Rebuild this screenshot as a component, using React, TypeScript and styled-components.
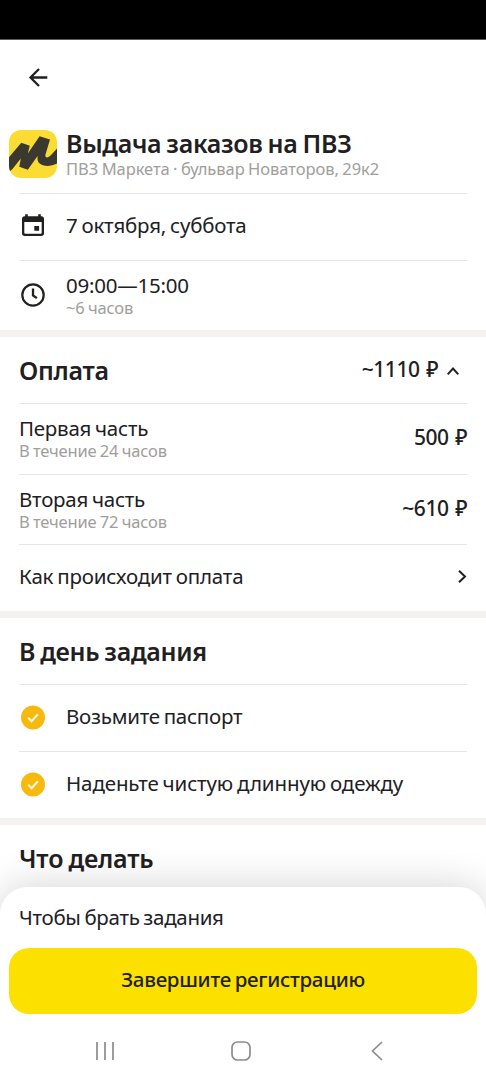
import React from "react";
import styled, { createGlobalStyle } from "styled-components";

const GlobalStyle = createGlobalStyle`
  *, *::before, *::after { box-sizing: border-box; }
  body {
    margin: 0;
    background: #fff;
    color: #21201f;
    font-family: "Noto Sans", "Open Sans", sans-serif;
  }
`;

const Screen = styled.div`
  width: 486px;
  height: 1080px;
  display: flex;
  flex-direction: column;
  overflow: hidden;
  background: #fff;
`;

const StatusBar = styled.div`
  height: 40px;
  flex: none;
  background: #000;
  border-bottom: 1px solid #5c5c5c;
`;

const Content = styled.main`
  height: 847px;
  flex: none;
  display: flex;
  flex-direction: column;
`;

const Header = styled.header`
  height: 76px;
  flex: none;
  padding: 25px 0 0 26px;
`;

const Hero = styled.div`
  height: 77px;
  flex: none;
  display: flex;
  gap: 9px;
  padding: 12px 0 0 9px;
`;

const HeroLogo = styled.svg`
  margin-top: 2px;
  flex: none;
`;

const Stack = styled.div`
  display: flex;
  flex-direction: column;
`;

const Title = styled.h1<{ $track?: number }>`
  margin: 0;
  font-size: 25px;
  line-height: 30px;
  font-weight: 600;
  white-space: nowrap;
  letter-spacing: ${(p) => p.$track ?? -0.29}px;
  word-spacing: -1.2px;
`;

const Primary = styled.span<{ $track?: number }>`
  font-size: 20.5px;
  line-height: 24px;
  white-space: nowrap;
  letter-spacing: ${(p) => p.$track ?? -0.24}px;
  word-spacing: -1.2px;
`;

const Amount = styled.span`
  font-size: 21px;
  line-height: 24px;
  font-weight: 500;
  white-space: nowrap;
  letter-spacing: -0.5px;
  word-spacing: 1.8px;
  padding-bottom: 2px;
`;

const Secondary = styled.span<{ $track?: number }>`
  font-size: 16.5px;
  line-height: 21px;
  color: #a09e9c;
  white-space: nowrap;
  letter-spacing: ${(p) => p.$track ?? -0.16}px;
  word-spacing: -0.8px;
`;

const Row = styled.div<{ $height: number; $shift?: number }>`
  height: ${(p) => p.$height}px;
  flex: none;
  margin: 0 19px;
  padding-bottom: ${(p) => p.$shift ?? 0}px;
  border-top: 1px solid #e6e6e6;
  display: flex;
  align-items: center;
  justify-content: space-between;
`;

const SectionHead = styled.div`
  height: 66px;
  flex: none;
  padding: 0 27px 0 19px;
  display: flex;
  align-items: center;
  justify-content: space-between;
`;

const Total = styled.div`
  display: flex;
  align-items: center;
  gap: 9px;
`;

const Lead = styled.div`
  display: flex;
  align-items: center;
`;

const IconSlot = styled.span<{ $drop?: number }>`
  width: 47px;
  height: 28px;
  flex: none;
  display: flex;
  align-items: center;
  transform: translateY(${(p) => p.$drop ?? 0}px);
`;

const Band = styled.div`
  height: 7px;
  flex: none;
  background: #f4f2f1;
`;

const Sheet = styled.footer`
  flex: 1;
  position: relative;
  border-radius: 27px 27px 0 0;
  background: #fff;
  box-shadow: 0 0 40px rgba(0, 0, 0, 0.18);
  display: flex;
  flex-direction: column;
`;

const SheetNote = styled.div`
  height: 61px;
  padding: 18px 19px 0;
  display: flex;
`;

const Button = styled.button`
  height: 66px;
  margin: 0 9px;
  padding: 0 0 4px;
  border: 0;
  border-radius: 20px;
  background: #fce000;
  color: #21201f;
  font-family: inherit;
  font-size: 20.5px;
  font-weight: 500;
  line-height: 24px;
  letter-spacing: -0.28px;
  word-spacing: -1.3px;
`;

const NavBar = styled.nav`
  flex: 1;
  display: flex;
  align-items: center;
  justify-content: space-between;
  padding: 8px 102px 0 94px;
`;

const HomeKey = styled.svg`
  margin-right: 4px;
`;

const Check = () => (
  <svg width="28" height="28" viewBox="0 0 28 28">
    <circle cx="14" cy="14" r="12" fill="#f8b90f" />
    <path d="M9.2 14.2l3.4 3.5 6.3-7" fill="none" stroke="#fff8dc" strokeWidth="2.1" />
  </svg>
);

const Calendar = () => (
  <svg width="28" height="28" viewBox="0 0 28 28">
    <path
      fillRule="evenodd"
      fill="#21201f"
      d="M6.2 2.2h2.6v2h10.4v-2h2.6v2h.5a2.700 2.700 0 0 1 2.700 2.700v14.400a2.700 2.700 0 0 1-2.700 2.700H5.700a2.700 2.700 0 0 1-2.700-2.700V6.900a2.700 2.700 0 0 1 2.700-2.700h.5zM5.300 10v10.700a1 1 0 0 0 1 1h15.400a1 1 0 0 0 1-1V10zM15.300 14h4.800v4.800h-4.800z"
    />
  </svg>
);

const Clock = () => (
  <svg width="28" height="28" viewBox="0 0 28 28" fill="none" stroke="#21201f">
    <circle cx="14" cy="14" r="10.700" strokeWidth="2.200" />
    <path d="M14 7.600v6.700l3.900 2.900" strokeWidth="2.300" />
  </svg>
);

const BackArrow = () => (
  <svg width="24" height="24" viewBox="0 0 24 24" fill="none" stroke="#21201f" strokeWidth="2.300">
    <path d="M21.300 12.500H4.500M13 4L4.500 12.500L13 21" />
  </svg>
);

const Logo = () => (
  <HeroLogo width="48" height="48" viewBox="0 0 48 48">
    <defs>
      <clipPath id="logo-shape">
        <rect width="48" height="48" rx="12" />
      </clipPath>
    </defs>
    <g clipPath="url(#logo-shape)">
      <rect width="48" height="48" fill="#fbdc33" />
      <path
        fill="#3b382f"
        d="M-1 28.500L12.300 12.800L20.800 15.800L18.800 23.500L30.600 6.200L41 9.600L36.500 24.500C35.800 27 37.500 28.200 39.500 27C42.600 25.200 45.500 20.600 49 17.500V33C45 35.500 40 36.300 36 35.800C30 35 27.500 31 28.800 25.800L18.800 39.700L10.300 36.700L11.800 28.500L3.500 39L0 42Z"
      />
    </g>
  </HeroLogo>
);

const payments = [
  { title: "Первая часть", note: "В течение 24 часов", sum: "500 ₽" },
  { title: "Вторая часть", note: "В течение 72 часов", sum: "~610 ₽" },
];

const reminders = [
  { text: "Возьмите паспорт", track: -0.25 },
  { text: "Наденьте чистую длинную одежду", track: -0.12 },
];

export default function App() {
  return (
    <Screen>
      <GlobalStyle />
      <StatusBar />
      <Content>
        <Header>
          <BackArrow />
        </Header>
        <Hero>
          <Logo />
          <Stack>
            <Title>Выдача заказов на ПВЗ</Title>
            <Secondary $track={-0.05}>ПВЗ Маркета · бульвар Новаторов, 29к2</Secondary>
          </Stack>
        </Hero>
        <Row $height={67} $shift={4}>
          <Lead>
            <IconSlot $drop={1}>
              <Calendar />
            </IconSlot>
            <Primary $track={-0.2}>7 октября, суббота</Primary>
          </Lead>
        </Row>
        <Row $height={70} $shift={1}>
          <Lead>
            <IconSlot>
              <Clock />
            </IconSlot>
            <Stack>
              <Primary>09:00—15:00</Primary>
              <Secondary>~6 часов</Secondary>
            </Stack>
          </Lead>
        </Row>
        <Band />
        <SectionHead>
          <Title as="h2">Оплата</Title>
          <Total>
            <Amount>~1110 ₽</Amount>
            <svg width="12" height="14" viewBox="0 0 12 14" fill="none" stroke="#21201f" strokeWidth="1.900">
              <path d="M0.700 11.300L6 5.500L11.300 11.300" />
            </svg>
          </Total>
        </SectionHead>
        {payments.map((p, i) => (
          <Row key={p.title} $height={i === 0 ? 71 : 70} $shift={i === 0 ? 2 : 1}>
            <Stack>
              <Primary>{p.title}</Primary>
              <Secondary>{p.note}</Secondary>
            </Stack>
            <Amount>{p.sum}</Amount>
          </Row>
        ))}
        <Row $height={67} $shift={4}>
          <Primary $track={-0.2}>Как происходит оплата</Primary>
          <svg width="10" height="14" viewBox="0 0 10 14" fill="none" stroke="#21201f" strokeWidth="2">
            <path d="M2 1.700L8 7.500L2 13.300" />
          </svg>
        </Row>
        <Band />
        <SectionHead>
          <Title as="h2">В день задания</Title>
        </SectionHead>
        {reminders.map((r) => (
          <Row key={r.text} $height={67} $shift={4}>
            <Lead>
              <IconSlot $drop={1.5}>
                <Check />
              </IconSlot>
              <Primary $track={r.track}>{r.text}</Primary>
            </Lead>
          </Row>
        ))}
        <Band />
        <SectionHead>
          <Title as="h2" $track={-0.18}>Что делать</Title>
        </SectionHead>
      </Content>
      <Sheet>
        <SheetNote>
          <Primary $track={-0.3}>Чтобы брать задания</Primary>
        </SheetNote>
        <Button>Завершите регистрацию</Button>
        <NavBar>
          <svg width="22" height="22" viewBox="0 0 22 22" stroke="#8c8c8c" strokeWidth="1.700">
            <path d="M3 2v18M11 2v18M19 2v18" />
          </svg>
          <HomeKey width="22" height="22" viewBox="0 0 22 22" fill="none" stroke="#8c8c8c" strokeWidth="1.700">
            <rect x="2" y="2" width="18" height="18" rx="5.500" />
          </HomeKey>
          <svg width="14" height="22" viewBox="0 0 14 22" fill="none" stroke="#8c8c8c" strokeWidth="1.700">
            <path d="M12 2L2.500 11L12 20" />
          </svg>
        </NavBar>
      </Sheet>
    </Screen>
  );
}
